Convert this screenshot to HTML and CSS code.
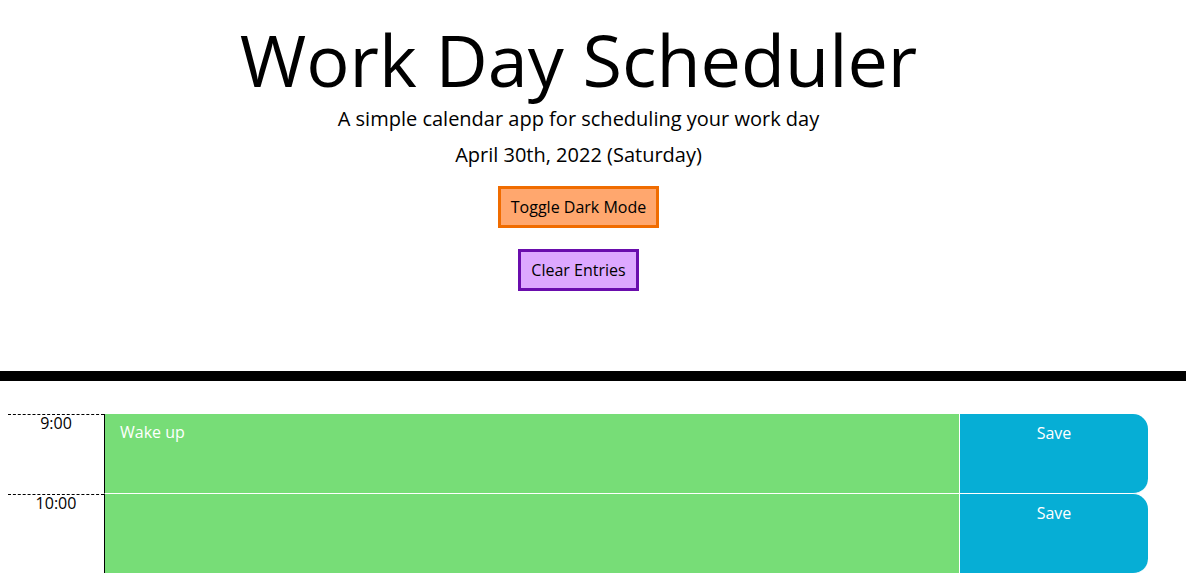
FILE: index.html
```html
<!DOCTYPE html>
<html lang="en">
<head>
<meta charset="utf-8">
<title>Work Day Scheduler</title>
<link rel="stylesheet" href="styles.css">
</head>
<body>
<header class="jumbotron">
  <h1 class="title">Work Day Scheduler</h1>
  <p class="lead">A simple calendar app for scheduling your work day</p>
  <p class="lead date">April 30th, 2022 (Saturday)</p>
  <div class="actions">
    <button class="btn btn-toggle">Toggle Dark Mode</button>
    <button class="btn btn-clear">Clear Entries</button>
  </div>
</header>
<main class="schedule">
  <div class="time-block">
    <div class="hour">9:00</div>
    <textarea class="description future">Wake up</textarea>
    <button class="save-btn">Save</button>
  </div>
  <div class="time-block">
    <div class="hour">10:00</div>
    <textarea class="description future"></textarea>
    <button class="save-btn">Save</button>
  </div>
</main>
</body>
</html>
```

FILE: styles.css
```css
html, body {
  margin: 0;
  padding: 0;
}
body {
  font-family: "Open Sans", "Liberation Sans", sans-serif;
  color: #000;
  background: #fff;
  font-size: 16px;
  line-height: 1.5;
  overflow: hidden;
}
.jumbotron {
  text-align: center;
  padding: 16px 29px 80px 0;
  border-bottom: 10px solid #000;
}
.title {
  margin: 0 0 -1px;
  font-size: 72px;
  font-weight: 400;
  line-height: 1.2;
}
.lead {
  margin: 0;
  font-size: 20px;
  line-height: 36px;
}
.date {
  margin-bottom: 13px;
}
.actions {
  display: flex;
  flex-direction: column;
  align-items: center;
  gap: 21px;
}
.btn {
  font-family: "Open Sans", "Liberation Sans", sans-serif;
  font-size: 16px;
  line-height: 24px;
  padding: 6px 10px;
  color: #000;
  cursor: pointer;
}
.btn-toggle {
  background: #ffa76e;
  border: 3px solid #f06c00;
}
.btn-clear {
  background: #dda8ff;
  border: 3px solid #6a0dad;
}
.schedule {
  margin: 33px 0 0 8px;
  width: 1140px;
}
.time-block {
  display: grid;
  grid-template-columns: 96px 855px 189px;
  height: 80px;
}
.hour {
  border-top: 1px dashed #000;
  text-align: center;
  font-size: 16px;
  line-height: 16px;
  padding-top: 0;
}
.description {
  margin: 0;
  background: #77dd77;
  color: #fff;
  border: none;
  border-left: 1px solid #000;
  border-bottom: 1px solid #fff;
  font-family: "Open Sans", "Liberation Sans", sans-serif;
  font-size: 16px;
  line-height: 24px;
  padding: 6px 15px;
  resize: none;
  box-sizing: border-box;
  height: 80px;
}
.save-btn {
  margin: 0;
  background: #06aed5;
  color: #fff;
  border: none;
  border-left: 1px solid #fff;
  border-bottom: 1px solid #fff;
  border-radius: 0 15px 15px 0;
  font-family: "Open Sans", "Liberation Sans", sans-serif;
  font-size: 16px;
  line-height: 24px;
  padding: 7px 0 0;
  display: flex;
  justify-content: center;
  align-items: flex-start;
  height: 80px;
  box-sizing: border-box;
}
```
